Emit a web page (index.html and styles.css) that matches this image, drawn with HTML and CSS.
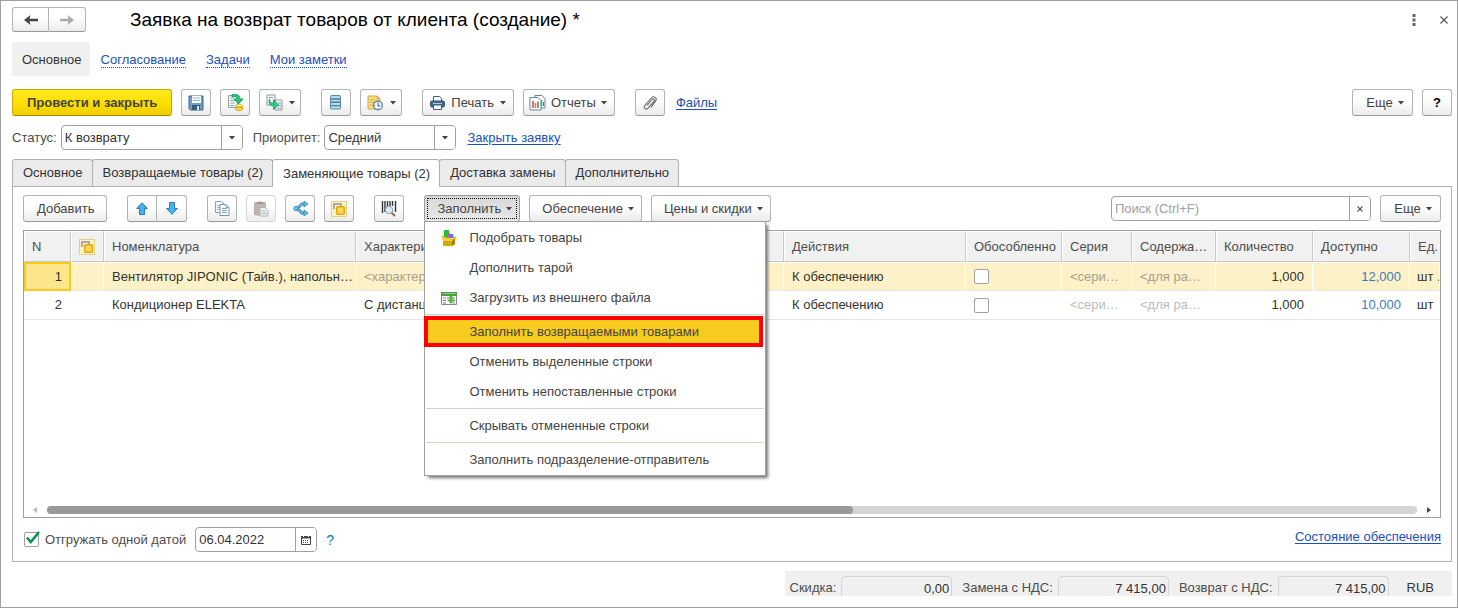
FILE: index.html
```html
<!DOCTYPE html>
<html lang="ru">
<head>
<meta charset="utf-8">
<title>Заявка на возврат товаров от клиента (создание) *</title>
<link rel="stylesheet" href="styles.css">
</head>
<body>
<svg class="defs" aria-hidden="true">
  <symbol id="reserve" viewBox="0 0 16 16">
    <rect x=".5" y=".5" width="15" height="15" fill="#fff2c4" stroke="#e3cf85"/>
    <path d="M3 8V3h7v2" fill="none" stroke="#a9a9a9" stroke-width="2"/>
    <rect x="5.7" y="5.7" width="7.6" height="7.6" rx="1" fill="#f8d763" stroke="#e0a800" stroke-width="1.5"/>
  </symbol>
  <symbol id="caret" viewBox="0 0 6 4"><path d="M0 0h6L3 3.5z" fill="#444"/></symbol>
</svg>
<div class="window">
  <header class="titlebar">
    <div class="pair">
      <button class="btn" aria-label="Назад"><svg width="14" height="10" viewBox="0 0 14 10"><path d="M6.500 0L5.500 3.700H14v2.600H5.500L6.500 10L0 5z" fill="#444"/></svg></button>
      <button class="btn" aria-label="Вперед"><svg width="14" height="10" viewBox="0 0 14 10"><path d="M7.500 0l1 3.700H0v2.600h8.500L7.500 10L14 5z" fill="#aaa"/></svg></button>
    </div>
    <h1>Заявка на возврат товаров от клиента (создание) *</h1>
    <button class="plain" aria-label="Меню окна"><svg width="4" height="12" viewBox="0 0 4 12"><path d="M.5 0h3v3h-3zM.5 4.500h3v3h-3zM.5 9h3v3h-3z" fill="#666"/></svg></button>
    <button class="plain" aria-label="Закрыть"><svg width="8" height="8" viewBox="0 0 8 8"><path d="M.5.5l7 7m0-7l-7 7" stroke="#555" stroke-width="1.200"/></svg></button>
  </header>

  <nav class="sections">
    <a class="current" href="#">Основное</a>
    <a href="#">Согласование</a>
    <a href="#">Задачи</a>
    <a href="#">Мои заметки</a>
  </nav>

  <div class="bar commands">
    <button class="btn primary">Провести и закрыть</button>
    <button class="btn icon" aria-label="Записать"><svg width="16" height="16" viewBox="0 0 16 16"><path d="M1 1h14v14H2.500L1 13.500z" fill="#6f9cc9" stroke="#3c6488"/><path d="M4 1h9v7H4z" fill="#fff"/><path d="M5 3h7M5 5.500h7" stroke="#8db4d4"/><path d="M4 10h8v5H4z" fill="#365a7b"/><path d="M9 11h2v4H9z" fill="#dbe9f5"/></svg></button>
    <button class="btn icon" aria-label="Провести"><svg width="17" height="17" viewBox="0 0 17 17"><path d="M1.500 1.500h9v12h-9z" fill="#fff" stroke="#8e9aa3"/><path d="M3 4h4M3 6.500h5M3 9h5M3 11.500h4" stroke="#8fa3b2"/><path d="M5 0.500c5-1 8 1 8 4.500h3l-4.500 5L7 5h3c0-2-2-3-5-2z" fill="#25c678" stroke="#0a9452" stroke-width=".8"/><path d="M8.500 11.500v4c1 1.300 6 1.300 7 0v-4" fill="#f7d64b" stroke="#d7ad24"/><path d="M8.500 13.500h7" stroke="#d7ad24"/><ellipse cx="12" cy="11.500" rx="3.500" ry="1.300" fill="#fff0a0" stroke="#d7ad24" stroke-width=".8"/></svg></button>
    <button class="btn drop-icon last" aria-label="Создать на основании"><svg width="17" height="17" viewBox="0 0 17 17"><path d="M1 1h8v10H1z" fill="#fff" stroke="#8295a3"/><path d="M3 3.500h4" stroke="#8295a3"/><path d="M9 6h7v10H9z" fill="#fff" stroke="#8295a3"/><path d="M12 9h3M12 11.500h3M11 14h4" stroke="#8295a3"/><path d="M3.500 5c0 3 1 4 4 4l0-3.500 5 5.500-5 4.500V12C4 12 2 9 3.500 5z" fill="#2bd184" stroke="#119955" stroke-width=".8"/></svg><svg class="caret"><use href="#caret"/></svg></button>
    <button class="btn icon" aria-label="Структура подчиненности"><svg width="12" height="15" viewBox="0 0 12 15"><rect x=".5" y=".5" width="10" height="13.500" rx="1" fill="#b8d9ea" stroke="#5d8aa3"/><path d="M1 4h9M1 7.300h9M1 10.600h9" stroke="#4f7f9c" stroke-width="1.400"/></svg></button>
    <button class="btn drop-icon last" aria-label="Напоминание"><svg width="17" height="16" viewBox="0 0 17 16"><path d="M1 1h9l3 3v10H1z" fill="#f9dd83" stroke="#d2ac4a"/><path d="M10 1v3h3M3 5h5M3 7.500h4M3 10h3" fill="none" stroke="#d2ac4a"/><circle cx="11" cy="10.500" r="4.400" fill="#f7fbff" stroke="#4e7fb3" stroke-width="1.200"/><path d="M11 8v3h2.500" fill="none" stroke="#315c89"/><path d="M11 7v1M11 13v1M7.500 10.500h1" stroke="#e04b4b"/></svg><svg class="caret"><use href="#caret"/></svg></button>
    <button class="btn drop with-icon"><svg width="15" height="14" viewBox="0 0 15 14"><path d="M3.500 5V.5h6l2 2V5" fill="#fff" stroke="#31617f"/><rect x=".5" y="5" width="14" height="6" rx="1.500" fill="#426f91" stroke="#274f6c"/><path d="M3 7.500h9" stroke="#a9c7dc"/><path d="M3.500 9h8v4.500h-8z" fill="#fff" stroke="#31617f"/></svg>Печать<svg class="caret"><use href="#caret"/></svg></button>
    <button class="btn drop with-icon tight-icon last"><svg width="17" height="16" viewBox="0 0 17 16"><path d="M6 .5h7l3 3V13H6z" fill="#fff" stroke="#66869c"/><path d="M12.500 5v6M14.500 7v4" stroke="#2d9e5a" stroke-width="1.300"/><path d="M1 2.500h8l3 3v9.500H1z" fill="#fff" stroke="#66869c"/><path d="M4 6v7" stroke="#e04c3b" stroke-width="1.600"/><path d="M6.500 8v5" stroke="#eb7a35" stroke-width="1.600"/><path d="M9 6.500V13" stroke="#2da85c" stroke-width="1.600"/></svg>Отчеты<svg class="caret"><use href="#caret"/></svg></button>
    <button class="btn icon" aria-label="Присоединенные файлы"><svg width="14" height="16" viewBox="0 0 14 16"><path d="M4 10.500l5-6c1.200-1.400 3.200.2 2 1.700l-6 7c-2 2.200-5-.2-3.200-2.500l6.500-7.700c2.600-2.800 6.400.2 4.200 3.200L8 12.300" fill="none" stroke="#686868" stroke-width="1.100"/></svg></button>
    <a class="link" href="#">Файлы</a>
    <button class="btn drop more push">Еще<svg class="caret"><use href="#caret"/></svg></button>
    <button class="btn icon help">?</button>
  </div>

  <div class="bar fields">
    <label for="status">Статус:</label>
    <div class="box status"><select id="status"><option>К возврату</option></select><span class="end"><svg class="caret"><use href="#caret"/></svg></span></div>
    <label class="priority-label" for="priority">Приоритет:</label>
    <div class="box priority"><select id="priority"><option>Средний</option></select><span class="end"><svg class="caret"><use href="#caret"/></svg></span></div>
    <a class="link" href="#">Закрыть заявку</a>
  </div>

  <div class="tabs" role="tablist">
    <button role="tab">Основное</button>
    <button role="tab">Возвращаемые товары (2)</button>
    <button role="tab" aria-selected="true" class="active">Заменяющие товары (2)</button>
    <button role="tab">Доставка замены</button>
    <button role="tab">Дополнительно</button>
  </div>

  <main class="panel">
    <div class="bar tools">
      <button class="btn text last">Добавить</button>
      <div class="pair last">
        <button class="btn" aria-label="Вверх"><svg width="12" height="13" viewBox="0 0 12 13"><path d="M6 .7l5.300 5.800H8.500v6h-5v-6H.7z" fill="#44b3ee" stroke="#267fb2"/></svg></button>
        <button class="btn" aria-label="Вниз"><svg width="12" height="13" viewBox="0 0 12 13"><path d="M6 12.300L.7 6.500h2.800v-6h5v6h2.800z" fill="#44b3ee" stroke="#267fb2"/></svg></button>
      </div>
      <button class="btn icon" aria-label="Копировать"><svg width="15" height="15" viewBox="0 0 15 15"><path d="M.5.5h6l3 3v8h-9z" fill="#fff" stroke="#83a5b6"/><path d="M2 4.500h3M2 6.500h3M2 8.500h3" stroke="#9db8c5"/><path d="M5 3.500h6l3 3v8H5z" fill="#fff" stroke="#6d98ad"/><path d="M11 3.500v3h3M7 7.500h5M7 9.500h5M7 11.500h5" fill="none" stroke="#83a5b6"/></svg></button>
      <button class="btn icon muted" aria-label="Вставить"><svg width="15" height="16" viewBox="0 0 15 16"><rect x=".5" y="1.500" width="11" height="12.500" rx="1" fill="#b5a9a5" stroke="#a69b98"/><path d="M3 3V1h2l1-1 1 1h2v2z" fill="#858585"/><path d="M6 6.500h5l3 3V15H6z" fill="#eee" stroke="#a0a5aa"/><path d="M7.500 10h4M7.500 12.500h5" stroke="#a0a5aa"/></svg></button>
      <button class="btn icon" aria-label="Разбить строку"><svg width="15" height="15" viewBox="0 0 15 15"><path d="M13 3H9L4 7.500 9 12h4" fill="none" stroke="#287fac" stroke-width="3"/><path d="M13 3H9L3 7.500 9 12h4" fill="none" stroke="#80d0f3" stroke-width="1.200"/><path d="M11 0l4 3-4 3zM11 9l4 3-4 3z" fill="#70c5ed" stroke="#287fac" stroke-width=".8"/><circle cx="3" cy="7.500" r="2.200" fill="#70c5ed" stroke="#287fac" stroke-width=".8"/></svg></button>
      <button class="btn icon last" aria-label="Резервирование"><svg width="16" height="16"><use href="#reserve"/></svg></button>
      <button class="btn icon last" aria-label="Поиск по штрихкоду"><svg width="16" height="16" viewBox="0 0 16 16"><path d="M1.500 0v12M4 0v11M6.500 0v6M9 0v5M11.500 0v5M14.500 0v11" stroke="#333" stroke-width="1.400"/><path d="M10 11l4 4" stroke="#a66a42" stroke-width="2.200"/><circle cx="8" cy="9" r="3.700" fill="#d8ebfb" stroke="#8a9cb6"/></svg></button>
      <div class="menu-host">
        <button class="btn drop pressed" aria-haspopup="menu" aria-expanded="true">Заполнить<svg class="caret"><use href="#caret"/></svg></button>
        <div class="menu" role="menu">
          <button role="menuitem"><svg width="16" height="17" viewBox="0 0 16 17"><path d="M3 0h5v8H3z" fill="#22c43b"/><path d="M6 3h3l1 5H6z" fill="#e4509a"/><path d="M9 4h3l1 4H9z" fill="#5c7be0"/><path d="M0 7l2-2 3 3H2z" fill="#e8bb30"/><path d="M2 9h12v5l-3 2H2z" fill="#d9a514"/><path d="M1 8h11l-1 3H2z" fill="#f4d13a"/><path d="M12 8l2-2 2 2-2 2z" fill="#e9c13e"/><path d="M11 11v5l3-2V9z" fill="#aa7c08"/></svg>Подобрать товары</button>
          <button role="menuitem">Дополнить тарой</button>
          <button role="menuitem"><svg width="16" height="13" viewBox="0 0 16 13"><path d="M.5.5h15v12H.5z" fill="#fff" stroke="#888"/><path d="M0 0h16v4H0z" fill="#4e9e44"/><path d="M1.500 1.500h13" stroke="#91cb82"/><path d="M2 6h3M6 6h3M11 6h3M2 8.500h3M11 8.500h3M2 11h3M12 11h2" stroke="#777"/><path d="M8.500 4h3v3.500H14L10 12 6 7.500h2.500z" fill="#5bb545"/></svg>Загрузить из внешнего файла</button>
          <hr>
          <button role="menuitem" class="marked">Заполнить возвращаемыми товарами</button>
          <button role="menuitem">Отменить выделенные строки</button>
          <button role="menuitem">Отменить непоставленные строки</button>
          <hr>
          <button role="menuitem">Скрывать отмененные строки</button>
          <hr>
          <button role="menuitem">Заполнить подразделение-отправитель</button>
        </div>
      </div>
      <button class="btn drop">Обеспечение<svg class="caret"><use href="#caret"/></svg></button>
      <button class="btn drop">Цены и скидки<svg class="caret"><use href="#caret"/></svg></button>
      <div class="box search push"><input type="text" aria-label="Поиск" placeholder="Поиск (Ctrl+F)"><button class="end" aria-label="Очистить"><svg width="6" height="6" viewBox="0 0 6 6"><path d="M.5.5l5 5m0-5l-5 5" stroke="#555" stroke-width="1.100"/></svg></button></div>
      <button class="btn drop more">Еще<svg class="caret"><use href="#caret"/></svg></button>
    </div>

    <div class="grid">
      <table>
        <colgroup><col class="w-n"><col class="w-res"><col class="w-item"><col><col class="w-act"><col class="w-sep"><col class="w-ser"><col class="w-cont"><col class="w-qty"><col class="w-qty"><col class="w-unit"></colgroup>
        <thead>
          <tr><th>N</th><th><svg width="16" height="16"><use href="#reserve"/></svg></th><th>Номенклатура</th><th>Характеристика</th><th>Действия</th><th class="tight">Обособленно</th><th>Серия</th><th>Содержание</th><th>Количество</th><th>Доступно</th><th class="cut">Ед.</th></tr>
        </thead>
        <tbody>
          <tr class="selected"><td class="num focus">1</td><td></td><td class="tight">Вентилятор JIPONIC (Тайв.), напольный</td><td class="hint">&lt;характеристика&gt;</td><td>К обеспечению</td><td><input type="checkbox" aria-label="Обособленно, строка 1"></td><td class="hint">&lt;серия номенклатуры&gt;</td><td class="hint">&lt;для работ&gt;</td><td class="num">1,000</td><td class="num blue">12,000</td><td class="cut">шт .</td></tr>
          <tr><td class="num">2</td><td></td><td>Кондиционер ELEKTA</td><td>С дистанцией</td><td>К обеспечению</td><td><input type="checkbox" aria-label="Обособленно, строка 2"></td><td class="hint">&lt;серия номенклатуры&gt;</td><td class="hint">&lt;для работ&gt;</td><td class="num">1,000</td><td class="num blue">10,000</td><td class="cut">шт</td></tr>
        </tbody>
      </table>
      <div class="scroll">
        <svg width="4" height="6" viewBox="0 0 4 6"><path d="M4 0v6L0 3z" fill="#bbb"/></svg>
        <div class="track"><div class="thumb"></div></div>
        <svg width="4" height="6" viewBox="0 0 4 6"><path d="M0 0v6l4-3z" fill="#444"/></svg>
      </div>
    </div>

    <div class="bar under">
      <label class="check"><input type="checkbox" checked><svg class="tick" width="14" height="13" viewBox="0 0 14 13"><path d="M1 6.500l3.800 4.500L13 1" fill="none" stroke="#009646" stroke-width="2.400"/></svg>Отгружать одной датой</label>
      <div class="box date"><input type="text" aria-label="Дата отгрузки" value="06.04.2022"><button class="end" aria-label="Календарь"><svg width="10" height="10" viewBox="0 0 10 10"><path d="M.5 1.500h9v8h-9z" fill="#fff" stroke="#444"/><path d="M0 1h10v2.500H0z" fill="#444"/><path d="M2.500 0v2M7.500 0v2" stroke="#fff"/><path d="M2 5.500h6M2 7.500h6" stroke="#444" stroke-dasharray="1 1"/></svg></button></div>
      <a class="what" href="#">?</a>
      <a class="link supply push" href="#">Состояние обеспечения</a>
    </div>
  </main>

  <footer class="totals">
    <label for="t1">Скидка:</label><input id="t1" readonly value="0,00">
    <label for="t2">Замена с НДС:</label><input id="t2" readonly value="7 415,00">
    <label for="t3">Возврат с НДС:</label><input id="t3" readonly value="7 415,00">
    <span class="currency">RUB</span>
  </footer>
</div>
</body>
</html>
```
FILE: styles.css
```css
* { box-sizing: border-box; }
body, button, input, select { font: 13px/16px "Liberation Sans", Arial, sans-serif; color: #333; }
body { margin: 0; background: #fff; }
button { padding: 0; cursor: pointer; }
svg { display: block; flex: none; }
.defs { position: absolute; width: 0; height: 0; }

.window {
  display: flex;
  flex-direction: column;
  min-height: 100vh;
  padding: 6px 5px 11px 11px;
  border: 1px solid #a0a0a0;
}

/* Buttons */
.btn {
  display: flex;
  align-items: center;
  justify-content: center;
  height: 27px;
  border: 1px solid #b4b4b4;
  border-bottom-color: #999;
  border-radius: 3px;
  background: linear-gradient(#fff 40%, #ebebeb);
  color: #444;
  white-space: nowrap;
}
.icon { width: 30px; }
.text { padding: 0 12px 0 13px; }
.drop-icon { width: 42px; gap: 6px; }
.drop { gap: 5px; padding: 0 7px 0 12px; }
.with-icon { gap: 6px; padding-left: 7px; }
.tight-icon { gap: 5px; padding-left: 5px; }
.more { min-width: 61px; }
.caret { width: 6px; height: 4px; }
.primary {
  padding: 0 14px;
  border-color: #c9a800;
  border-bottom-color: #a08600;
  background: linear-gradient(#ffea1f, #fbdc00 60%, #efcf00);
  font-weight: bold;
}
.help { color: #000; font-weight: bold; }
.muted { border-color: #d0d0d0; opacity: .85; }
.pair { display: flex; }
.pair .btn { width: 30px; }
.pair .btn:first-child { border-radius: 3px 0 0 3px; }
.pair .btn:last-child { border-left: 0; border-radius: 0 3px 3px 0; }
.plain { display: flex; justify-content: center; width: 14px; border: 0; background: none; }
.link { color: #1a50b8; text-underline-offset: 2px; }
.push { margin-left: auto; }

/* Window header */
.titlebar { display: flex; align-items: center; height: 25px; padding-right: 1px; }
.titlebar .btn { width: 37px; height: 25px; }
.titlebar h1 { flex: 1; margin: 0 0 0 44px; color: #000; font-size: 19px; line-height: 24px; font-weight: normal; }
.titlebar .plain + .plain { margin-left: 16px; }

.sections { display: flex; align-items: center; gap: 20px; margin-top: 10px; height: 34px; }
.sections a { padding-top: 2px; color: #1a50b8; line-height: 14px; text-decoration: none; border-bottom: 1px dotted #1a50b8; }
.sections .current { margin-right: -9px; padding: 11px 8px 9px 10px; border: 0; border-radius: 3px; background: #f0f0f0; color: #333; }

/* Rows of controls */
.bar { display: flex; align-items: center; gap: 9px; }
.bar > .last { margin-right: 11px; }
.commands { margin-top: 13px; }
.commands .link { margin-left: 2px; }
.fields { margin-top: 9px; gap: 4px; }
.fields label, .check { color: #4d4d4d; }
.fields .link { margin-left: 7px; }
.priority-label { margin-left: 6px; }

.box { display: flex; height: 25px; overflow: hidden; border: 1px solid #a0a0a0; border-radius: 4px; background: #fff; }
.box select, .box input { flex: 1; min-width: 0; padding: 0 3px; border: 0; background: none; appearance: none; outline: 0; }
.box input::placeholder { color: #a0a0a0; }
.end { display: flex; align-items: center; justify-content: center; width: 21px; border: 0; border-left: 1px solid #a0a0a0; background: #fff; }
.status { width: 182px; }
.priority { width: 132px; }
.search { width: 260px; }
.date { width: 122px; }

/* Tabs */
.tabs { display: flex; margin-top: 9px; }
.tabs button {
  height: 27px;
  margin-right: -1px;
  padding: 0 9px 0 10px;
  border: 1px solid #b0b0b0;
  border-bottom: 0;
  border-radius: 3px 3px 0 0;
  background: #ebebeb;
  white-space: nowrap;
}
.tabs .active { position: relative; height: 28px; margin-bottom: -1px; background: #fff; }

.panel { flex: 1; display: flex; flex-direction: column; padding: 8px 10px 9px; border: 1px solid #b0b0b0; }

/* Drop-down menu */
.menu-host { position: relative; }
.pressed { background: linear-gradient(#d8d8d8, #e8e8e8); border-color: #999; outline: 1px dotted #000; outline-offset: -4px; }
.menu {
  position: absolute;
  z-index: 2;
  top: 26px;
  left: 0;
  width: 342px;
  padding-bottom: 1px;
  border: 1px solid #a0a0a0;
  background: #fff;
  box-shadow: 3px 3px 3px -1px #777;
}
.menu button {
  position: relative;
  display: flex;
  align-items: center;
  width: 100%;
  height: 30px;
  padding: 2px 0 0 44px;
  border: 0;
  background: none;
  color: #444;
  white-space: nowrap;
}
.menu svg { position: absolute; left: 16px; }
.menu hr { height: 1px; margin: 2px 1px 1px; border: 0; background: #d8d5c3; }
.menu .marked { width: 339px; height: 31px; margin: 0 0 -1px -1px; padding: 0 0 0 41px; border: 4px solid #f00; background: #f9cb1f; }

/* Item table */
.grid { flex: 1; display: flex; flex-direction: column; justify-content: space-between; margin-top: 8px; border: 1px solid #a0a0a0; }
table { width: 100%; table-layout: fixed; border-collapse: separate; border-spacing: 0; }
th, td { height: 29px; padding: 0 8px; overflow: hidden; text-align: left; text-overflow: ellipsis; white-space: nowrap; font-weight: normal; }
th { height: 31px; border: 1px solid #fff; border-right-color: #c8c8c8; border-bottom-color: #c8c8c8; background: #f1f1f1; color: #4d4d4d; padding: 0 7px; }
td { border-bottom: 1px solid #e6e6e6; border-right: 1px solid transparent; }
.tight { padding-right: 2px; }
.selected td { border-top: 1px solid #fff; border-right: 1px solid #fff; background: #fdf2c7; }
.num { text-align: right; }
.hint { padding-right: 11px; color: #bbb; }
.selected .hint { color: #a6a08c; }
.blue { color: #3e7cb8; }
.selected .focus { border: 2px solid #f9cb1f; background: #fde58c; padding-right: 7px; }
.cut { text-overflow: clip; border-right: 0; padding: 0 0 0 7px; }
td input, .check input { display: block; width: 15px; height: 15px; margin: 0; border: 1px solid #a0a0a0; border-radius: 2px; background: #fff; appearance: none; }
.w-n { width: 47px; }
.w-res { width: 33px; }
.w-item { width: 252px; }
.w-act { width: 182px; }
.w-sep { width: 96px; }
.w-ser { width: 70px; }
.w-cont { width: 84px; }
.w-qty { width: 97px; }
.w-unit { width: 30px; }

.scroll { display: flex; align-items: center; gap: 10px; height: 14px; padding: 0 9px; }
.track { flex: 1; height: 8px; border-radius: 4px; background: #d4d4d4; }
.thumb { width: 58.8%; height: 8px; border-radius: 4px; background: #999; }

.under { margin-top: 9px; }
.check { position: relative; display: flex; align-items: center; gap: 6px; padding-left: 1px; }
.tick { position: absolute; left: 3px; top: -1px; pointer-events: none; }
.what { color: #0080c8; font-size: 14px; text-decoration: none; }
.supply { align-self: flex-start; padding-top: 2px; }

/* Totals strip */
.totals { display: flex; align-self: flex-end; height: 25px; margin-top: 9px; padding: 5px 18px 0 5px; overflow: hidden; background: #f0f0f0; color: #4d4d4d; }
.totals label, .currency { padding-top: 4px; white-space: nowrap; }
.totals input { width: 111px; height: 25px; margin: 0 10px 0 5px; padding: 0 2px; border: 1px solid #d6d6d6; border-radius: 4px; background: #f0f0f0; text-align: right; }
.currency { margin-left: 8px; color: #333; }
```
